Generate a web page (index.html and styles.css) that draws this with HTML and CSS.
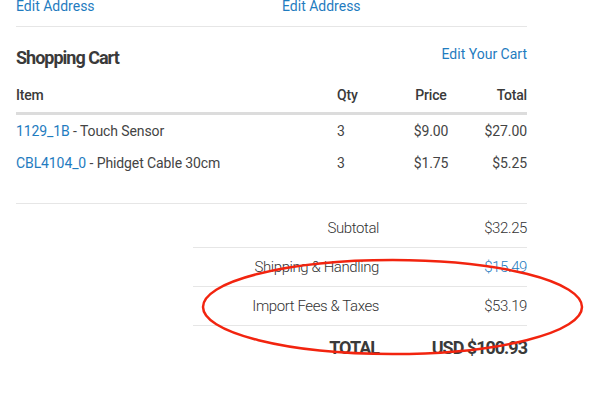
FILE: index.html
```html
<!DOCTYPE html>
<html>
<head>
<meta charset="utf-8">
<link rel="stylesheet" href="styles.css">
</head>
<body>
<div class="page">
  <div class="addr-row">
    <a class="link">Edit Address</a>
    <a class="link">Edit Address</a>
  </div>
  <div class="cart-head">
    <h2 class="title">Shopping Cart</h2>
    <a class="link">Edit Your Cart</a>
  </div>
  <div class="items">
    <div class="row head">
      <div>Item</div><div>Qty</div><div class="price">Price</div><div class="total">Total</div>
    </div>
    <div class="row item">
      <div><a class="link">1129_1B</a> - Touch Sensor</div><div>3</div><div class="price">$9.00</div><div class="total">$27.00</div>
    </div>
    <div class="row item">
      <div><a class="link">CBL4104_0</a> - Phidget Cable 30cm</div><div>3</div><div class="price">$1.75</div><div class="total">$5.25</div>
    </div>
  </div>
  <div class="sums">
    <div class="sum"><div class="lbl">Subtotal</div><div class="val">$32.25</div></div>
    <div class="sum"><div class="lbl">Shipping &amp; Handling</div><div class="val blue">$15.49</div></div>
    <div class="sum"><div class="lbl">Import Fees &amp; Taxes</div><div class="val">$53.19</div></div>
    <div class="sum grand"><div class="lbl">TOTAL</div><div class="val">USD $100.93</div></div>
  </div>
</div>
<svg class="circle" width="597" height="396" viewBox="0 0 597 396">
  <ellipse cx="392.5" cy="307" rx="189.5" ry="47" fill="none" stroke="#f2240f" stroke-width="2.5"/>
</svg>
</body>
</html>
```
FILE: styles.css
```css
html, body { margin: 0; padding: 0; background: #fff; }
body { font-family: Roboto, "Noto Sans", sans-serif; color: #444; font-size: 14px; position: relative; width: 597px; height: 396px; overflow: hidden; }
.page { width: 511px; padding-left: 16px; }
.link { color: #1f7cc0; text-decoration: none; }
.addr-row { display: grid; grid-template-columns: 266px 1fr; margin-top: -4px; height: 30px; line-height: 20px; border-bottom: 1px solid #e6e6e6; }
.cart-head { display: flex; justify-content: space-between; align-items: flex-start; padding-top: 17px; height: 39px; }
.title { margin: 0; font-size: 18px; font-weight: 700; letter-spacing: -1px; color: #3a3a3a; line-height: 26px; padding-top: 1px; }
.cart-head .link { line-height: 20px; font-size: 14px; }
.items { border-bottom: 1px solid #e6e6e6; padding-bottom: 24px; }
.row { display: grid; grid-template-columns: 321px 75px 38px 1fr; line-height: 20px; }
.row.head { font-weight: 500; color: #3a3a3a; letter-spacing: -0.2px; height: 27px; border-bottom: 3px solid #dcdcdc; padding-top: 2px; }
.row.item { height: 32px; align-items: center; letter-spacing: -0.1px; }
.price { text-align: center; white-space: nowrap; }
.total { text-align: right; }
.sums { margin-left: 177px; padding-top: 5px; }
.sum { display: grid; grid-template-columns: 186px 1fr; height: 38px; line-height: 38px; border-bottom: 1px solid #e6e6e6; font-size: 15px; font-weight: 300; color: #333; letter-spacing: -0.4px; }
.sum .lbl, .sum .val { text-align: right; }
.sum .blue { color: #1f7cc0; }
.sum.grand { border-bottom: none; font-weight: 700; font-size: 18px; letter-spacing: -1px; color: #3a3a3a; line-height: 44px; height: 44px; }
.circle { position: absolute; left: 0; top: 0; pointer-events: none; }
```
